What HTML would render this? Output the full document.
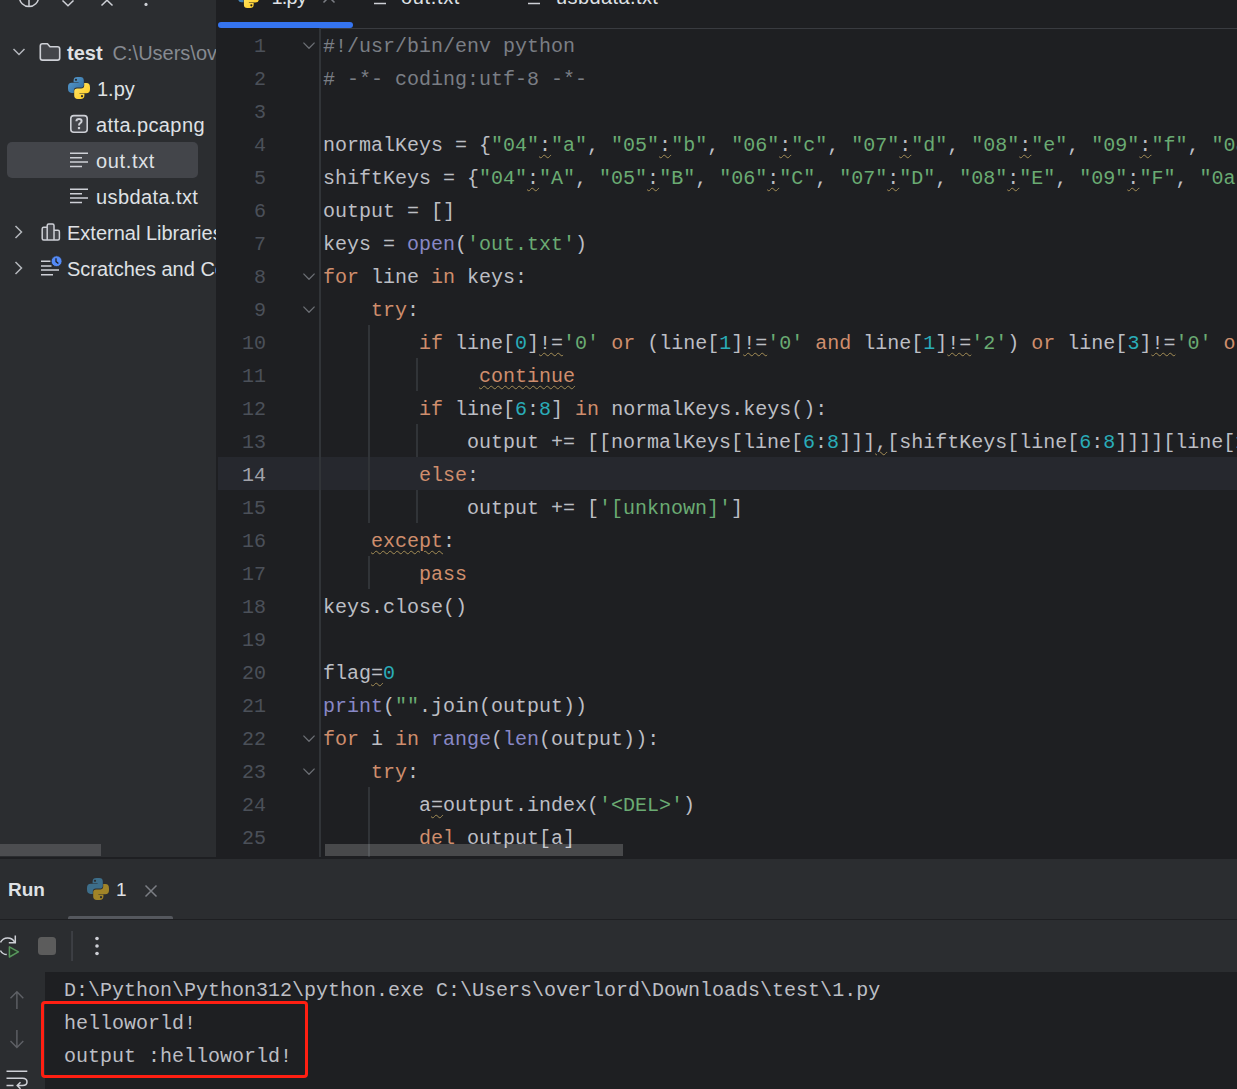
<!DOCTYPE html>
<html><head><meta charset="utf-8">
<style>
*{margin:0;padding:0;box-sizing:border-box}
html,body{width:1237px;height:1089px;overflow:hidden;background:#1E1F22}
body{position:relative;font-family:"Liberation Sans",sans-serif}
.abs{position:absolute}
#proj{left:0;top:0;width:216px;height:857px;background:#2B2D30;overflow:hidden}
#editor{left:216px;top:0;width:1021px;height:857px;background:#1E1F22;overflow:hidden}
#run{left:0;top:859px;width:1237px;height:230px;background:#2B2D30;overflow:hidden}
.tree{position:absolute;font-size:20px;letter-spacing:0.4px;color:#DFE1E5;white-space:nowrap;line-height:36px;height:36px}
.code{position:absolute;left:107px;font-family:"Liberation Mono",monospace;font-size:20px;line-height:33px;white-space:pre;color:#BCBEC4}
.ln{position:absolute;left:0;width:50px;text-align:right;font-family:"Liberation Mono",monospace;font-size:20px;line-height:33px;color:#4B5059}
.k{color:#CF8E6D}.s{color:#6AAB73}.n{color:#2AACB8}.b{color:#8888C6}.c{color:#7A7E85}
.w{text-decoration:underline wavy #A38D55;text-decoration-thickness:1px;text-underline-offset:3px}
.con{position:absolute;left:64px;font-family:"Liberation Mono",monospace;font-size:20px;line-height:33px;white-space:pre;color:#BCBEC4}
</style></head><body><svg width="0" height="0" style="position:absolute"><defs>
<linearGradient id="pyb" x1="0" y1="0" x2="1" y2="1"><stop offset="0" stop-color="#5A9FD4"/><stop offset="1" stop-color="#306998"/></linearGradient>
<linearGradient id="pyy" x1="1" y1="1" x2="0" y2="0"><stop offset="0" stop-color="#FFE873"/><stop offset="1" stop-color="#FFC917"/></linearGradient>
<symbol id="pysnake" viewBox="0 0 22 22"><path d="M5.6 3.4Q5.6 0 9.4 0H12.2Q15.8 0 15.8 3.4V7.8Q15.8 10.6 12.8 10.6H8.9Q5.8 10.6 5.8 13.6V15.9H3.6Q0 15.9 0 11.6V9.8Q0 5.7 3.8 5.7H10.6V5.3H5.6Z"/></symbol>
</defs></svg>
<div id="proj" class="abs"><svg class="abs" style="left:0;top:0" width="160" height="12" viewBox="0 0 160 12"><circle cx="29" cy="-3" r="9.6" fill="none" stroke="#CED0D6" stroke-width="1.5"/><line x1="29" y1="-3" x2="29" y2="7" stroke="#CED0D6" stroke-width="1.5"/><path d="M62.5 0.5 L68 5.8 L73.5 0.5" fill="none" stroke="#CED0D6" stroke-width="1.5"/><path d="M101.5 5.5 L107 0.2 L112.5 5.5" fill="none" stroke="#CED0D6" stroke-width="1.5"/><circle cx="146" cy="4.4" r="1.6" fill="#CED0D6"/></svg>
<div class="abs" style="left:7px;top:142px;width:191px;height:36px;border-radius:5px;background:#43454A"></div>
<svg class="abs" style="left:0;top:0" width="40" height="300" viewBox="0 0 40 300"><path d="M13.5 49 L19 54.5 L24.5 49" fill="none" stroke="#B4B7BC" stroke-width="1.5"/><path d="M15.5 226 L21.5 232 L15.5 238" fill="none" stroke="#B4B7BC" stroke-width="1.5"/><path d="M15.5 262 L21.5 268 L15.5 274" fill="none" stroke="#B4B7BC" stroke-width="1.5"/></svg>
<svg class="abs" style="left:39px;top:42px" width="23" height="20" viewBox="0 0 23 20"><path d="M1.3 4Q1.3 1.8 3.5 1.8H8.4L11 4.8H18.5Q20.7 4.8 20.7 7V15.9Q20.7 18.1 18.5 18.1H3.5Q1.3 18.1 1.3 15.9Z" fill="#43454A" stroke="#CED0D6" stroke-width="1.6" stroke-linejoin="round"/></svg>
<svg class="abs" style="left:69px;top:114px" width="20" height="20" viewBox="0 0 20 20"><rect x="1.8" y="1.6" width="16.4" height="16.6" rx="3" fill="#43454A" stroke="#CED0D6" stroke-width="1.6"/><path d="M7.4 7.3Q7.4 4.9 10 4.9Q12.6 4.9 12.6 7.1Q12.6 8.5 11.2 9.2Q10 9.8 10 11.4" fill="none" stroke="#CED0D6" stroke-width="2"/><rect x="8.9" y="13" width="2.2" height="2.2" fill="#CED0D6"/></svg>
<svg class="abs" style="left:69px;top:151px" width="20" height="18" viewBox="0 0 20 18"><path d="M1 2.3H19M1 6.8H13M1 11.1H19M1 15.6H13" stroke="#CED0D6" stroke-width="1.5"/></svg>
<svg class="abs" style="left:69px;top:187px" width="20" height="18" viewBox="0 0 20 18"><path d="M1 2.3H19M1 6.8H13M1 11.1H19M1 15.6H13" stroke="#CED0D6" stroke-width="1.5"/></svg>
<svg class="abs" style="left:40px;top:222px" width="22" height="20" viewBox="0 0 22 20"><path d="M2.2 6.8Q2.2 5.3 3.7 5.3H7.2V17.9H3.7Q2.2 17.9 2.2 16.4Z M7.2 3.6Q7.2 2.1 8.7 2.1H12.5Q14 2.1 14 3.6V17.9H7.2Z M14 8.3H17.9Q19.4 8.3 19.4 9.8V16.4Q19.4 17.9 17.9 17.9H14Z" fill="#43454A" stroke="#CED0D6" stroke-width="1.5" stroke-linejoin="round"/></svg>
<svg class="abs" style="left:40px;top:254px" width="24" height="24" viewBox="0 0 24 24"><path d="M1 7.2H10.5M1 12H11.5M1 16H19M1 20.8H13" stroke="#CED0D6" stroke-width="1.5"/><circle cx="16.6" cy="7.2" r="5.4" fill="#548AF7" stroke="#2B2D30" stroke-width="0.8"/><path d="M16 4.2V7.6L18.4 9.6" fill="none" stroke="#1E1F22" stroke-width="1.3"/></svg>
<svg class="abs" style="left:68px;top:77px" width="22" height="22" viewBox="0 0 22 22">
<use href="#pysnake" fill="url(#pyb)"/><circle cx="8" cy="2.8" r="1.1" fill="#2B2D30"/>
<g transform="rotate(180 11 11)"><use href="#pysnake" fill="url(#pyy)"/><circle cx="8" cy="2.8" r="1.1" fill="#2B2D30"/></g>
</svg>
<div class="tree" style="left:67px;top:35.4px;"><b style="letter-spacing:0">test</b><span style="color:#868A91;margin-left:10px;letter-spacing:0">C:\Users\overlord\Downloads\test</span></div>
<div class="tree" style="left:97px;top:71.4px;letter-spacing:0">1.py</div>
<div class="tree" style="left:96px;top:107.4px;">atta.pcapng</div>
<div class="tree" style="left:96px;top:143.4px;letter-spacing:0.65px">out.txt</div>
<div class="tree" style="left:96px;top:179.4px;">usbdata.txt</div>
<div class="tree" style="left:67px;top:215.4px;letter-spacing:0">External Libraries</div>
<div class="tree" style="left:67px;top:251.4px;letter-spacing:0">Scratches and Consoles</div>
<div class="abs" style="left:0;top:844px;width:101px;height:12px;background:#4C4D50"></div>
</div>
<div id="editor" class="abs"><div class="abs" style="left:0;top:0;width:1021px;height:28px;background:#1E1F22"></div>
<div class="abs" style="left:2px;top:22px;width:135px;height:6px;border-radius:3px;background:#3574F0"></div>
<div class="abs" style="left:104px;top:28px;width:917px;height:1px;background:#393B40"></div>
<div class="abs" style="left:2px;top:457px;width:1019px;height:33px;background:#26282E"></div>
<div class="abs" style="left:103px;top:28px;width:2px;height:829px;background:#313438"></div>
<div class="abs" style="left:152px;top:325px;width:2px;height:33px;background:#313438"></div>
<div class="abs" style="left:152px;top:358px;width:2px;height:33px;background:#313438"></div>
<div class="abs" style="left:152px;top:391px;width:2px;height:33px;background:#313438"></div>
<div class="abs" style="left:152px;top:424px;width:2px;height:33px;background:#313438"></div>
<div class="abs" style="left:152px;top:457px;width:2px;height:33px;background:#313438"></div>
<div class="abs" style="left:152px;top:490px;width:2px;height:33px;background:#313438"></div>
<div class="abs" style="left:200px;top:358px;width:2px;height:33px;background:#313438"></div>
<div class="abs" style="left:200px;top:424px;width:2px;height:33px;background:#313438"></div>
<div class="abs" style="left:200px;top:490px;width:2px;height:33px;background:#313438"></div>
<div class="abs" style="left:152px;top:556px;width:2px;height:33px;background:#313438"></div>
<div class="abs" style="left:152px;top:787px;width:2px;height:33px;background:#313438"></div>
<div class="abs" style="left:152px;top:820px;width:2px;height:33px;background:#313438"></div>
<div class="abs" style="left:152px;top:853px;width:2px;height:33px;background:#313438"></div>
<div class="ln" style="top:30px;">1</div>
<div class="code" style="top:30px"><span class="c">#!/usr/bin/env python</span></div>
<div class="ln" style="top:63px;">2</div>
<div class="code" style="top:63px"><span class="c"># -*- coding:utf-8 -*-</span></div>
<div class="ln" style="top:96px;">3</div>
<div class="code" style="top:96px"></div>
<div class="ln" style="top:129px;">4</div>
<div class="code" style="top:129px">normalKeys = {<span class="s">&quot;04&quot;</span><span class="w">:</span><span class="s">&quot;a&quot;</span>, <span class="s">&quot;05&quot;</span><span class="w">:</span><span class="s">&quot;b&quot;</span>, <span class="s">&quot;06&quot;</span><span class="w">:</span><span class="s">&quot;c&quot;</span>, <span class="s">&quot;07&quot;</span><span class="w">:</span><span class="s">&quot;d&quot;</span>, <span class="s">&quot;08&quot;</span><span class="w">:</span><span class="s">&quot;e&quot;</span>, <span class="s">&quot;09&quot;</span><span class="w">:</span><span class="s">&quot;f&quot;</span>, <span class="s">&quot;0a&quot;</span><span class="w">:</span><span class="s">&quot;g&quot;</span>, <span class="s">&quot;0b&quot;</span><span class="w">:</span><span class="s">&quot;h&quot;</span></div>
<div class="ln" style="top:162px;">5</div>
<div class="code" style="top:162px">shiftKeys = {<span class="s">&quot;04&quot;</span><span class="w">:</span><span class="s">&quot;A&quot;</span>, <span class="s">&quot;05&quot;</span><span class="w">:</span><span class="s">&quot;B&quot;</span>, <span class="s">&quot;06&quot;</span><span class="w">:</span><span class="s">&quot;C&quot;</span>, <span class="s">&quot;07&quot;</span><span class="w">:</span><span class="s">&quot;D&quot;</span>, <span class="s">&quot;08&quot;</span><span class="w">:</span><span class="s">&quot;E&quot;</span>, <span class="s">&quot;09&quot;</span><span class="w">:</span><span class="s">&quot;F&quot;</span>, <span class="s">&quot;0a&quot;</span><span class="w">:</span><span class="s">&quot;G&quot;</span>, <span class="s">&quot;0b&quot;</span><span class="w">:</span><span class="s">&quot;H&quot;</span></div>
<div class="ln" style="top:195px;">6</div>
<div class="code" style="top:195px">output = []</div>
<div class="ln" style="top:228px;">7</div>
<div class="code" style="top:228px">keys = <span class="b">open</span>(<span class="s">&#x27;out.txt&#x27;</span>)</div>
<div class="ln" style="top:261px;">8</div>
<div class="code" style="top:261px"><span class="k">for</span> line <span class="k">in</span> keys:</div>
<div class="ln" style="top:294px;">9</div>
<div class="code" style="top:294px">    <span class="k">try</span>:</div>
<div class="ln" style="top:327px;">10</div>
<div class="code" style="top:327px">        <span class="k">if</span> line[<span class="n">0</span>]<span class="w">!=</span><span class="s">&#x27;0&#x27;</span> <span class="k">or</span> (line[<span class="n">1</span>]<span class="w">!=</span><span class="s">&#x27;0&#x27;</span> <span class="k">and</span> line[<span class="n">1</span>]<span class="w">!=</span><span class="s">&#x27;2&#x27;</span>) <span class="k">or</span> line[<span class="n">3</span>]<span class="w">!=</span><span class="s">&#x27;0&#x27;</span> <span class="k">or</span> line</div>
<div class="ln" style="top:360px;">11</div>
<div class="code" style="top:360px">             <span class="k w">continue</span></div>
<div class="ln" style="top:393px;">12</div>
<div class="code" style="top:393px">        <span class="k">if</span> line[<span class="n">6</span>:<span class="n">8</span>] <span class="k">in</span> normalKeys.keys():</div>
<div class="ln" style="top:426px;">13</div>
<div class="code" style="top:426px">            output += [[normalKeys[line[<span class="n">6</span>:<span class="n">8</span>]]]<span class="w">,</span>[shiftKeys[line[<span class="n">6</span>:<span class="n">8</span>]]]][line[<span class="n">1</span>]]</div>
<div class="ln" style="top:459px;color:#A1A3AB">14</div>
<div class="code" style="top:459px">        <span class="k">else</span>:</div>
<div class="ln" style="top:492px;">15</div>
<div class="code" style="top:492px">            output += [<span class="s">&#x27;[unknown]&#x27;</span>]</div>
<div class="ln" style="top:525px;">16</div>
<div class="code" style="top:525px">    <span class="k w">except</span>:</div>
<div class="ln" style="top:558px;">17</div>
<div class="code" style="top:558px">        <span class="k">pass</span></div>
<div class="ln" style="top:591px;">18</div>
<div class="code" style="top:591px">keys.close()</div>
<div class="ln" style="top:624px;">19</div>
<div class="code" style="top:624px"></div>
<div class="ln" style="top:657px;">20</div>
<div class="code" style="top:657px">flag<span class="w">=</span><span class="n">0</span></div>
<div class="ln" style="top:690px;">21</div>
<div class="code" style="top:690px"><span class="b">print</span>(<span class="s">&quot;&quot;</span>.join(output))</div>
<div class="ln" style="top:723px;">22</div>
<div class="code" style="top:723px"><span class="k">for</span> i <span class="k">in</span> <span class="b">range</span>(<span class="b">len</span>(output)):</div>
<div class="ln" style="top:756px;">23</div>
<div class="code" style="top:756px">    <span class="k">try</span>:</div>
<div class="ln" style="top:789px;">24</div>
<div class="code" style="top:789px">        a<span class="w">=</span>output.index(<span class="s">&#x27;&lt;DEL&gt;&#x27;</span>)</div>
<div class="ln" style="top:822px;">25</div>
<div class="code" style="top:822px">        <span class="k">del</span> output[a]</div>
<svg class="abs" style="left:87px;top:41px" width="12" height="8" viewBox="0 0 12 8"><path d="M0.4 1.6 L6 7.3 L11.6 1.6" fill="none" stroke="#6C6F75" stroke-width="1.3"/></svg>
<svg class="abs" style="left:87px;top:272px" width="12" height="8" viewBox="0 0 12 8"><path d="M0.4 1.6 L6 7.3 L11.6 1.6" fill="none" stroke="#6C6F75" stroke-width="1.3"/></svg>
<svg class="abs" style="left:87px;top:305px" width="12" height="8" viewBox="0 0 12 8"><path d="M0.4 1.6 L6 7.3 L11.6 1.6" fill="none" stroke="#6C6F75" stroke-width="1.3"/></svg>
<svg class="abs" style="left:87px;top:734px" width="12" height="8" viewBox="0 0 12 8"><path d="M0.4 1.6 L6 7.3 L11.6 1.6" fill="none" stroke="#6C6F75" stroke-width="1.3"/></svg>
<svg class="abs" style="left:87px;top:767px" width="12" height="8" viewBox="0 0 12 8"><path d="M0.4 1.6 L6 7.3 L11.6 1.6" fill="none" stroke="#6C6F75" stroke-width="1.3"/></svg>
<div class="abs" style="left:109px;top:844px;width:298px;height:12px;background:rgba(255,255,255,0.187)"></div>
<svg class="abs" style="left:22px;top:-13px" width="21" height="21" viewBox="0 0 22 22">
<use href="#pysnake" fill="url(#pyb)"/><circle cx="8" cy="2.8" r="1.1" fill="#1E1F22"/>
<g transform="rotate(180 11 11)"><use href="#pysnake" fill="url(#pyy)"/><circle cx="8" cy="2.8" r="1.1" fill="#1E1F22"/></g>
</svg>
<div class="abs" style="left:55.5px;top:-12.9px;font-size:20px;line-height:20px;color:#DFE1E5;letter-spacing:-0.8px">1.py</div>
<svg class="abs" style="left:106px;top:-7px" width="14" height="12" viewBox="0 0 14 12"><path d="M1.5 -1.5L12.5 9.5M12.5 -1.5L1.5 9.5" stroke="#7B7E84" stroke-width="1.5"/></svg>
<svg class="abs" style="left:157px;top:-12px" width="20" height="18" viewBox="0 0 20 18"><path d="M1 2.3H19M1 6.8H13M1 11.1H19M1 15.6H13" stroke="#CED0D6" stroke-width="1.5"/></svg>
<div class="abs" style="left:185px;top:-12.9px;font-size:20px;line-height:20px;color:#DFE1E5;letter-spacing:0.65px">out.txt</div>
<svg class="abs" style="left:311px;top:-12px" width="20" height="18" viewBox="0 0 20 18"><path d="M1 2.3H19M1 6.8H13M1 11.1H19M1 15.6H13" stroke="#CED0D6" stroke-width="1.5"/></svg>
<div class="abs" style="left:340px;top:-12.9px;font-size:20px;line-height:20px;color:#DFE1E5;letter-spacing:0.4px">usbdata.txt</div>
</div>
<div id="run" class="abs"><div class="abs" style="left:8px;top:21px;font:bold 19px 'Liberation Sans';color:#DFE1E5;line-height:20px">Run</div>
<svg class="abs" style="left:87px;top:19px" width="22" height="22" viewBox="0 0 22 22">
<use href="#pysnake" fill="#3D6E8A"/><circle cx="8" cy="2.8" r="1.1" fill="#2B2D30"/>
<g transform="rotate(180 11 11)"><use href="#pysnake" fill="#A08428"/><circle cx="8" cy="2.8" r="1.1" fill="#2B2D30"/></g>
</svg>
<div class="abs" style="left:116px;top:21px;font:19px 'Liberation Sans';color:#DFE1E5;line-height:20px">1</div>
<svg class="abs" style="left:144px;top:25px" width="14" height="14" viewBox="0 0 14 14"><path d="M1.5 1.5L12.5 12.5M12.5 1.5L1.5 12.5" stroke="#7B7E84" stroke-width="1.5"/></svg>
<div class="abs" style="left:68px;top:57px;width:105px;height:4px;border-radius:2px 2px 0 0;background:#55585E"></div>
<div class="abs" style="left:0;top:60px;width:1237px;height:1px;background:#1E1F22"></div>
<svg class="abs" style="left:0;top:71px" width="120" height="34" viewBox="0 930 120 34"><path d="M0.5 942.5 A8 8 0 0 1 14.6 942" fill="none" stroke="#CED0D6" stroke-width="1.5"/><path d="M15.3 935.5V942.8H8.8" fill="none" stroke="#CED0D6" stroke-width="1.5"/><path d="M0.4 950.5 A8 8 0 0 0 6.8 954.6" fill="none" stroke="#CED0D6" stroke-width="1.5"/><path d="M9.4 946.8V957L18.4 951.9Z" fill="#253627" stroke="#57965C" stroke-width="1.5" stroke-linejoin="round"/><rect x="38" y="937" width="18" height="18" rx="3.5" fill="#5C5C5C"/><rect x="71.3" y="931" width="1.5" height="30" fill="#43454A"/><circle cx="97" cy="938.5" r="1.8" fill="#CED0D6"/><circle cx="97" cy="946" r="1.8" fill="#CED0D6"/><circle cx="97" cy="953.5" r="1.8" fill="#CED0D6"/></svg>
<div class="abs" style="left:45px;top:113px;width:1192px;height:117px;background:#1E1F22"></div>
<svg class="abs" style="left:0;top:126px" width="40" height="104" viewBox="0 985 40 104"><path d="M16.9 991.5V1009M10.5 998.2L16.9 991.8L23.3 998.2" fill="none" stroke="#5F6166" stroke-width="1.4"/><path d="M16.9 1030V1047.5M10.5 1041L16.9 1047.4L23.3 1041" fill="none" stroke="#5F6166" stroke-width="1.4"/><path d="M6.5 1071.2H27.3M6.5 1078.2H22.5Q27 1078.2 27 1082Q27 1085.5 22.5 1085.5H17.5M20.5 1082.2L17.2 1085.5L20.5 1088.8M6.5 1085.5H13.5" fill="none" stroke="#CED0D6" stroke-width="1.5"/></svg>
<div class="con" style="top:115px">D:\Python\Python312\python.exe C:\Users\overlord\Downloads\test\1.py</div>
<div class="con" style="top:148px">helloworld!</div>
<div class="con" style="top:181px">output :helloworld!</div>
<div class="abs" style="left:41px;top:141.5px;width:266.5px;height:77.5px;border:3.5px solid #FF1F12;border-radius:4px"></div>
</div>
</body></html>
